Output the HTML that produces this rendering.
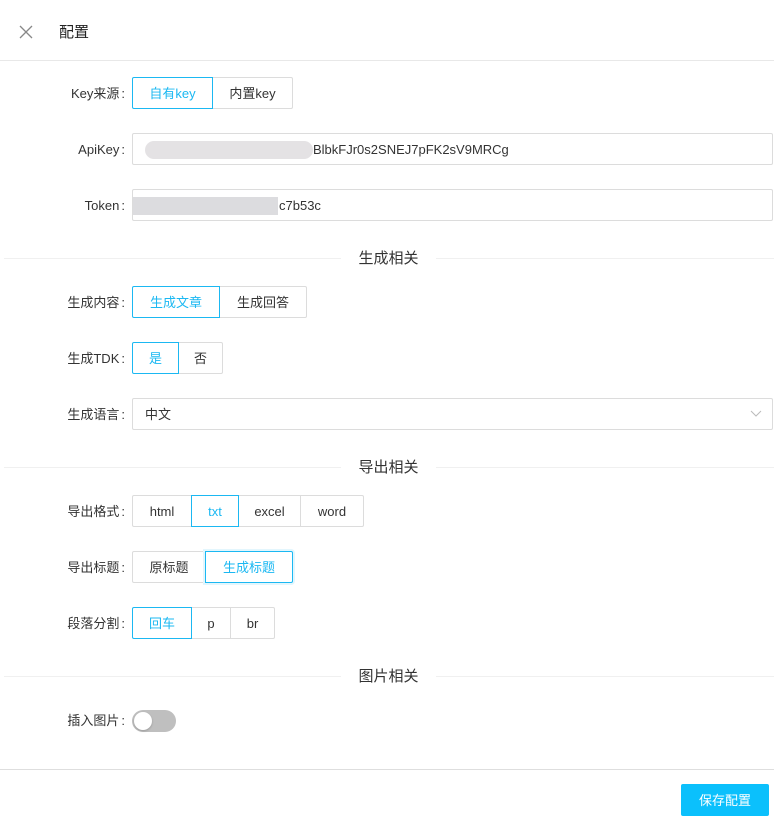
<!DOCTYPE html>
<html><head><meta charset="utf-8"><style>
*{box-sizing:border-box;margin:0;padding:0}
body{width:774px;height:825px;background:#fff;position:relative;overflow:hidden;font-family:"Liberation Sans","Noto Sans CJK SC",sans-serif;font-size:13px;color:#333}
.a{position:absolute}
.lbl{position:absolute;right:649px;width:120px;text-align:right;height:20px;line-height:22px;color:#333}
.lbl i{font-style:normal;margin-left:2px}
.seg{position:absolute;left:132px;display:flex;height:32px}
.seg div{border:1px solid #dcdcdc;margin-left:-1px;line-height:31px;text-align:center;color:#333;background:#fff}
.seg div:first-child{margin-left:0;border-radius:2px 0 0 2px}
.seg div:last-child{border-radius:0 2px 2px 0}
.seg div.on{border-color:#1bb8f2;color:#1bb8f2;position:relative;z-index:1}
.inp{position:absolute;left:132px;width:641px;height:32px;border:1px solid #dcdcdc;border-radius:2px;line-height:31px;padding-left:12px;color:#333}
.hr{position:absolute;height:1px;background:#f0f0f0}
.sec{position:absolute;left:341px;width:95px;text-align:center;font-size:15px;color:#333;height:20px;line-height:22px}
</style></head><body>
<svg class="a" style="left:19px;top:25px" width="14" height="14" viewBox="0 0 14 14"><path d="M1 1L13 13M13 1L1 13" stroke="#888" stroke-width="1.3"/></svg>
<div class="a" style="left:59px;top:22px;font-size:15px;color:#222;line-height:22px">配置</div>
<div class="hr" style="left:0;top:60px;width:774px;background:#e8e8e8"></div>

<div class="lbl" style="top:83px">Key来源<i>:</i></div>
<div class="seg" style="top:77px"><div class="on" style="width:81px">自有key</div><div style="width:81px">内置key</div></div>

<div class="lbl" style="top:139px">ApiKey<i>:</i></div>
<div class="inp" style="top:133px"><span class="a" style="left:12px;top:7px;width:168px;height:18px;background:#e4e2e4;border-radius:9px"></span><span class="a" style="left:180px">BlbkFJr0s2SNEJ7pFK2sV9MRCg</span></div>

<div class="lbl" style="top:195px">Token<i>:</i></div>
<div class="inp" style="top:189px"><span class="a" style="left:0px;top:7px;width:145px;height:18px;background:#dcdcdf"></span><span class="a" style="left:146px">c7b53c</span></div>

<div class="hr" style="left:4px;top:258px;width:337px"></div><div class="hr" style="left:436px;top:258px;width:338px"></div>
<div class="sec" style="top:248px">生成相关</div>

<div class="lbl" style="top:292px">生成内容<i>:</i></div>
<div class="seg" style="top:286px"><div class="on" style="width:88px">生成文章</div><div style="width:88px">生成回答</div></div>

<div class="lbl" style="top:348px">生成TDK<i>:</i></div>
<div class="seg" style="top:342px"><div class="on" style="width:47px">是</div><div style="width:45px">否</div></div>

<div class="lbl" style="top:404px">生成语言<i>:</i></div>
<div class="inp" style="top:398px">中文<svg class="a" style="right:10px;top:11px" width="12" height="8" viewBox="0 0 12 8"><path d="M1 1L6 6L11 1" fill="none" stroke="#bbb" stroke-width="1"/></svg></div>

<div class="hr" style="left:4px;top:467px;width:337px"></div><div class="hr" style="left:436px;top:467px;width:338px"></div>
<div class="sec" style="top:457px">导出相关</div>

<div class="lbl" style="top:501px">导出格式<i>:</i></div>
<div class="seg" style="top:495px"><div style="width:60px">html</div><div class="on" style="width:48px">txt</div><div style="width:63px">excel</div><div style="width:64px">word</div></div>

<div class="lbl" style="top:557px">导出标题<i>:</i></div>
<div class="seg" style="top:551px"><div style="width:74px">原标题</div><div class="on" style="width:88px;box-shadow:0 0 0 2px #e3f6fd">生成标题</div></div>

<div class="lbl" style="top:613px">段落分割<i>:</i></div>
<div class="seg" style="top:607px"><div class="on" style="width:60px">回车</div><div style="width:40px">p</div><div style="width:45px">br</div></div>

<div class="hr" style="left:4px;top:676px;width:337px"></div><div class="hr" style="left:436px;top:676px;width:338px"></div>
<div class="sec" style="top:666px">图片相关</div>

<div class="lbl" style="top:710px">插入图片<i>:</i></div>
<div class="a" style="left:132px;top:710px;width:44px;height:22px;border-radius:11px;background:#bfbfbf"><div class="a" style="left:2px;top:2px;width:18px;height:18px;border-radius:50%;background:#fff;box-shadow:0 1px 2px rgba(0,0,0,.2)"></div></div>

<div class="hr" style="left:0;top:769px;width:774px;background:#dedede"></div>
<div class="a" style="left:681px;top:784px;width:88px;height:32px;background:#0bc0fc;border-radius:2px;color:#fff;text-align:center;line-height:33px;font-size:13px">保存配置</div>
</body></html>
